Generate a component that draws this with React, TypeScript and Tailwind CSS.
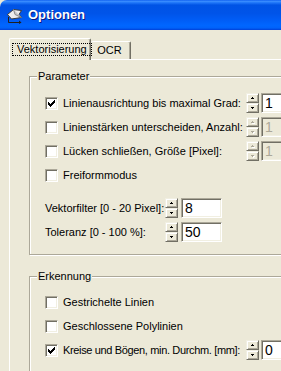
const raised =
  "border border-t-[#F1EFE2] border-l-[#F1EFE2] border-r-[#716F64] border-b-[#716F64] shadow-[inset_1px_1px_#ffffff,inset_-1px_-1px_#ACA899]";
const sunken =
  "border border-t-[#ACA899] border-l-[#ACA899] border-r-white border-b-white shadow-[inset_1px_1px_#716F64,inset_-1px_-1px_#F1EFE2]";

const checkPixels = [
  [6, 0], [5, 1], [6, 1], [0, 2], [4, 2], [5, 2], [6, 2],
  [0, 3], [1, 3], [3, 3], [4, 3], [5, 3], [0, 4], [1, 4], [2, 4],
  [3, 4], [4, 4], [1, 5], [2, 5], [3, 5], [2, 6],
];

function Checkbox({ checked }: { checked?: boolean }) {
  return (
    <div className={`w-[13px] h-[13px] shrink-0 bg-white flex items-center justify-center ${sunken}`}>
      {checked && (
        <svg width="7" height="7" viewBox="0 0 7 7" shapeRendering="crispEdges">
          {checkPixels.map(([x, y]) => (
            <rect key={`${x}-${y}`} x={x} y={y} width="1" height="1" fill="#000" />
          ))}
        </svg>
      )}
    </div>
  );
}

function Arrow({ up, disabled }: { up?: boolean; disabled?: boolean }) {
  const px = up
    ? [[1, 0], [0, 1], [1, 1], [2, 1]]
    : [[0, 0], [1, 0], [2, 0], [1, 1]];
  return (
    <svg width="4" height="3" viewBox="0 0 4 3" shapeRendering="crispEdges">
      {disabled &&
        px.map(([x, y]) => (
          <rect key={`s${x}-${y}`} x={x + 1} y={y + 1} width="1" height="1" fill="#fff" />
        ))}
      {px.map(([x, y]) => (
        <rect key={`${x}-${y}`} x={x} y={y} width="1" height="1" fill={disabled ? "#ACA899" : "#000"} />
      ))}
    </svg>
  );
}

function Spin({ disabled }: { disabled?: boolean }) {
  return (
    <div className="w-[13px] h-[20px] shrink-0 flex flex-col">
      <div className={`h-[10px] bg-[#ECE9D8] flex items-center justify-center ${raised}`}>
        <Arrow up disabled={disabled} />
      </div>
      <div className={`h-[10px] bg-[#ECE9D8] flex items-center justify-center ${raised}`}>
        <Arrow disabled={disabled} />
      </div>
    </div>
  );
}

function Edit({ value, disabled, width }: { value: string; disabled?: boolean; width: string }) {
  return (
    <div
      className={`${width} h-[20px] shrink-0 flex items-center pl-[3px] text-[14px] leading-none ${sunken} ${
        disabled ? "bg-[#ECE9D8] text-[#ACA899]" : "bg-white text-black"
      }`}
    >
      {value}
    </div>
  );
}

function GroupBox({ title, className, children }: { title: string; className: string; children: React.ReactNode }) {
  return (
    <div className={`relative w-[290px] shrink-0 border border-[#ACA899] shadow-[inset_1px_1px_#ffffff,1px_1px_#ffffff] ${className}`}>
      <span className="absolute left-[7px] -top-[8px] bg-[#ECE9D8] px-[1px] leading-[14px]">{title}</span>
      {children}
    </div>
  );
}

function CheckRow({
  label,
  checked,
  spin,
  value,
  disabled,
  tight,
}: {
  label: string;
  checked?: boolean;
  spin?: boolean;
  value?: string;
  disabled?: boolean;
  tight?: boolean;
}) {
  return (
    <div className="h-[24px] flex items-center pl-[15px]">
      <div className="w-[201px] flex items-center gap-[5px] whitespace-nowrap">
        <Checkbox checked={checked} />
        <span className={tight ? "tracking-[-0.35px]" : ""}>{label}</span>
      </div>
      {spin && (
        <div className="flex items-center gap-[2px]">
          <Spin disabled={disabled} />
          <Edit value={value ?? ""} disabled={disabled} width="w-[40px]" />
        </div>
      )}
    </div>
  );
}

function ValueRow({ label, value, className }: { label: string; value: string; className: string }) {
  return (
    <div className={`h-[20px] flex items-center pl-[15px] ${className}`}>
      <span className="w-[120px] whitespace-nowrap">{label}</span>
      <Spin />
      <div className="ml-[3px]">
        <Edit value={value} width="w-[41px]" />
      </div>
    </div>
  );
}

function TitleIcon() {
  return (
    <svg width="17" height="18" viewBox="0 0 17 18">
      <path d="M1.5 8.5 L7.5 3.5 L15.5 4.5 L13 8.5 L15.5 11.5 L5.5 13 Z" fill="#EDEDED" stroke="#3A3A3A" strokeWidth="1" />
      <path d="M7.5 3.5 L9 8.5 L15.5 11.5" fill="#C8C8C8" stroke="#8A8A8A" strokeWidth="1" />
      <path d="M2.5 11 V16.5 H14.5" fill="none" stroke="#202020" strokeWidth="1" />
      <path d="M13 14.5 L15.5 16.5 L13 18" fill="#202020" />
    </svg>
  );
}

export default function App() {
  return (
    <div className="w-[281px] h-[371px] overflow-hidden bg-[#ECE9D8] flex flex-col font-['Liberation_Sans',Arial,sans-serif] text-[11px] text-black">
      <div className="h-[30px] shrink-0 rounded-tl-[7px] flex items-center pl-[6px] gap-[5px] bg-[linear-gradient(to_bottom,#0A5BEE_0%,#3D8FFF_4%,#1F76F8_9%,#0053E5_17%,#0054E9_45%,#005CF5_65%,#0066FF_85%,#0062FA_93%,#0040D8_100%)]">
        <TitleIcon />
        <span className="text-white font-bold text-[13px] [text-shadow:1px_1px_#0A1883]">Optionen</span>
      </div>
      <div className="flex-1 flex min-h-0">
        <div className="w-[1px] bg-[#0838D5]" />
        <div className="w-[3px] bg-[#1262F3]" />
        <div className="flex-1 flex flex-col pl-[9px] pt-[8px]">
          <div className="h-[21px] flex items-end shrink-0">
            <div className="relative z-10 w-[82px] h-[22px] -mb-[1px] bg-[#ECE9D8] rounded-t-[2px] border-t border-l border-white border-r border-r-[#716F64] shadow-[inset_-1px_0_#ACA899] flex items-start pl-[2px] pt-[4px]">
              <span className="border border-dotted border-black px-[4px] leading-[11px] h-[13px]">Vektorisierung</span>
            </div>
            <div className="w-[40px] h-[18px] bg-[#ECE9D8] rounded-t-[2px] border-t border-white border-r border-r-[#716F64] shadow-[inset_-1px_0_#ACA899] flex items-center justify-center pr-[2px]">
              OCR
            </div>
          </div>
          <div className="flex-1 border-t border-l border-white pl-[19px] pt-[16px] flex flex-col">
            <GroupBox title="Parameter" className="h-[179px] pt-[14px]">
              <CheckRow label="Linienausrichtung bis maximal Grad:" checked spin value="1" />
              <CheckRow label="Linienstärken unterscheiden, Anzahl:" spin value="1" disabled />
              <CheckRow label="Lücken schließen, Größe [Pixel]:" spin value="1" disabled />
              <CheckRow label="Freiformmodus" />
              <ValueRow label="Vektorfilter [0 - 20 Pixel]:" value="8" className="mt-[11px]" />
              <ValueRow label="Toleranz [0 - 100 %]:" value="50" className="mt-[4px]" />
            </GroupBox>
            <GroupBox title="Erkennung" className="h-[120px] mt-[21px] pt-[13px]">
              <CheckRow label="Gestrichelte Linien" />
              <CheckRow label="Geschlossene Polylinien" />
              <CheckRow label="Kreise und Bögen, min. Durchm. [mm]:" checked spin value="0" tight />
            </GroupBox>
          </div>
        </div>
      </div>
    </div>
  );
}
